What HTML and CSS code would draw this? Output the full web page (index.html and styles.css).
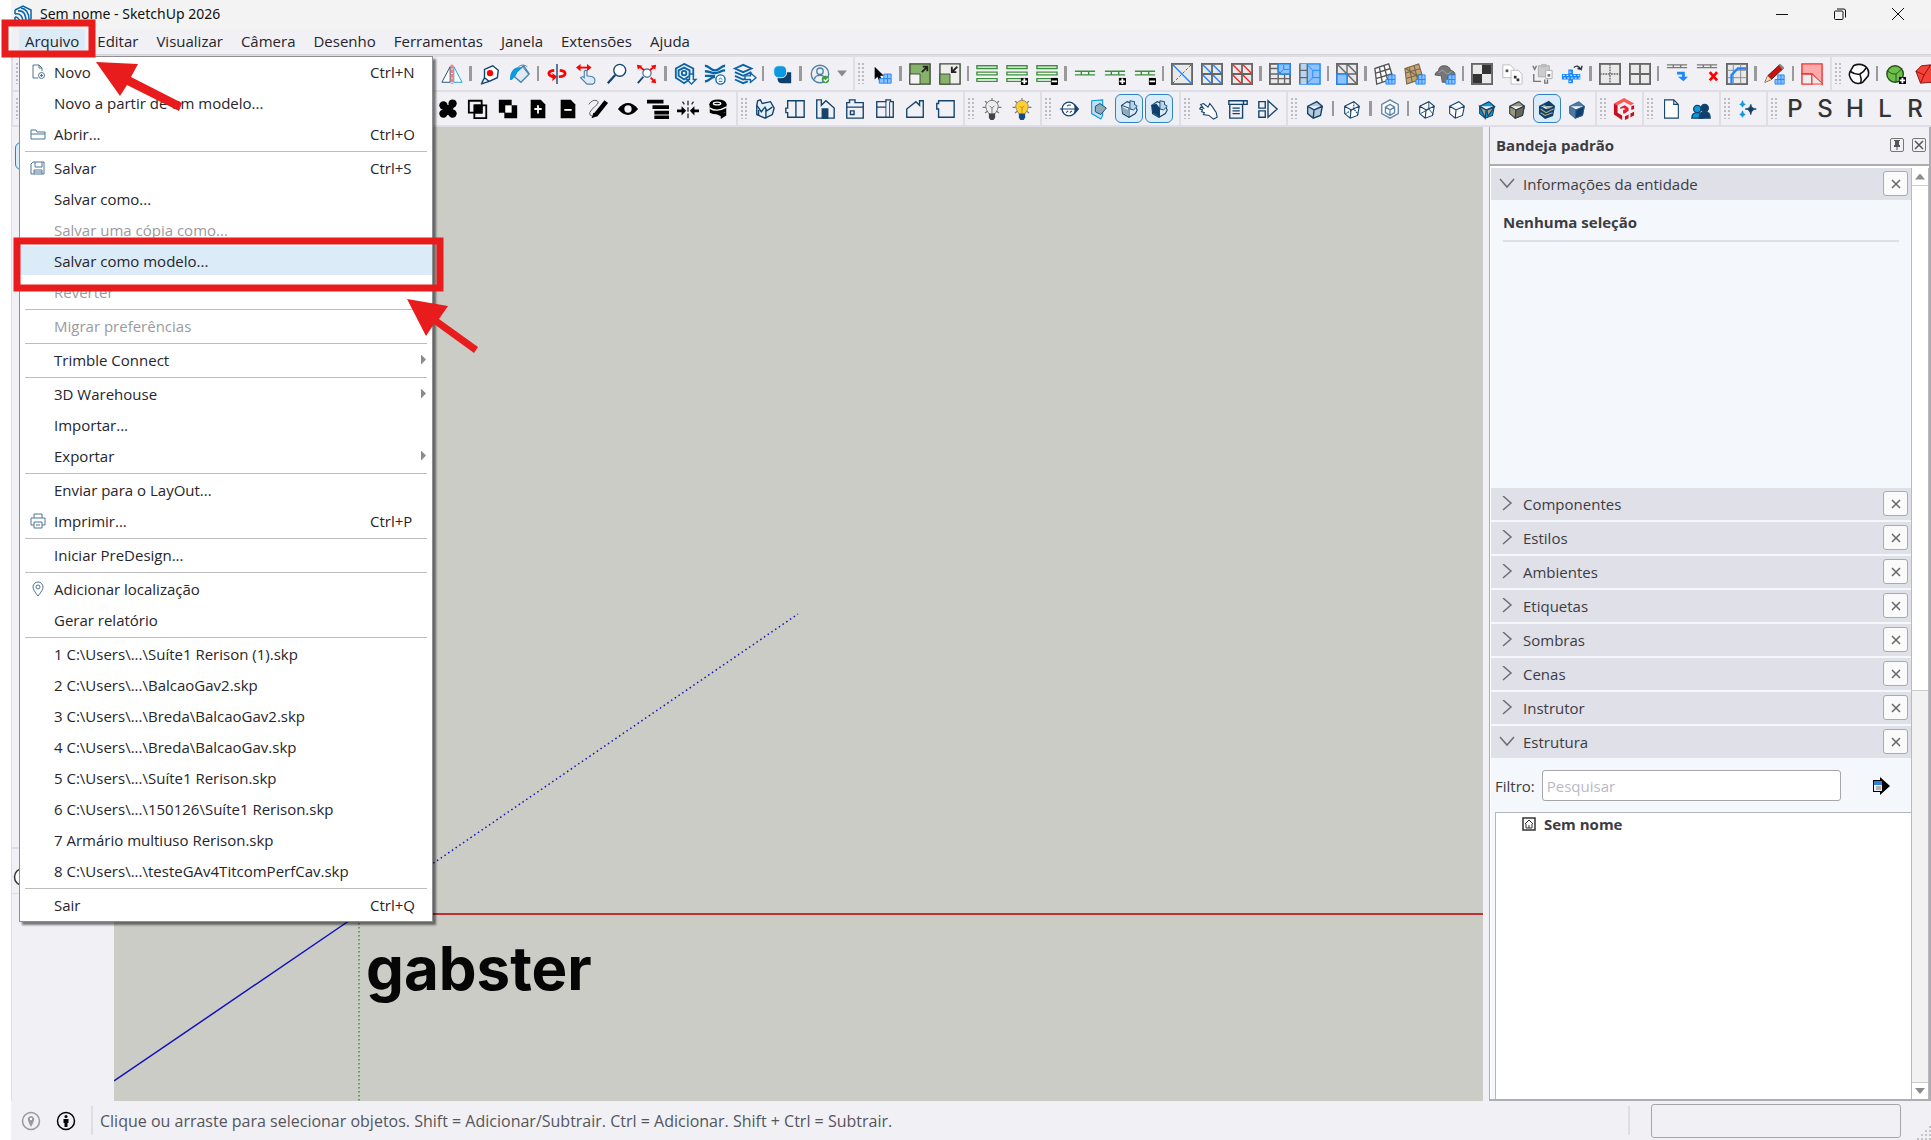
FILE: index.html
```html
<!DOCTYPE html>
<html lang="pt-BR">
<head>
<meta charset="utf-8">
<title>Sem nome - SketchUp 2026</title>
<link rel="stylesheet" href="styles.css">
</head>
<body>
<div class="app">
  <header class="titlebar">
    <svg class="logo" viewBox="0 0 20 20"><g fill="none" stroke="#0a64a8" stroke-width="1.500"><path d="M2 6l8-4 8 4v9l-5 4M2 6v4M2 13v3l6 3"/><path d="M2 10c5-1 8 2 8 9M5 7c6-1 8 4 8 11M8 4c6 1 8 5 8 12M2 13c2 0 4 1 5 5"/></g></svg>
    <h1>Sem nome - SketchUp 2026</h1>
    <div class="window-controls">
      <button aria-label="Minimizar"><svg viewBox="0 0 14 14"><path d="M1 7.500h12"/></svg></button>
      <button aria-label="Restaurar"><svg viewBox="0 0 14 14"><rect x="1.500" y="4" width="8.500" height="8.500" rx="1"/><path d="M4 2h7q1.500 0 1.500 2v6.500" /></svg></button>
      <button aria-label="Fechar"><svg viewBox="0 0 14 14"><path d="M1 1l12 12M13 1L1 13"/></svg></button>
    </div>
  </header>

  <nav class="menubar">
    <button class="open">Arquivo</button><button>Editar</button><button>Visualizar</button><button>Câmera</button><button>Desenho</button><button>Ferramentas</button><button>Janela</button><button>Extensões</button><button>Ajuda</button>
  </nav>

  <svg class="defs" aria-hidden="true">
    <symbol id="cube" viewBox="0 0 24 24"><path d="M4 9l10-5 6 5-2 10-8 3-6-5zM4 9l7 4 9-4M11 13l-1 9"/></symbol>
    <symbol id="grid" viewBox="0 0 24 24"><rect x="1" y="1" width="22" height="22" fill="#e9e9e9" stroke="#666" stroke-width="2"/></symbol>
    <symbol id="plus" viewBox="0 0 8 8"><rect width="8" height="8" rx="1" fill="#000"/><path d="M4 1v6M1 4h6" stroke="#fff" stroke-width="2"/></symbol>
    <symbol id="minus" viewBox="0 0 8 8"><rect width="8" height="8" rx="1" fill="#000"/><path d="M1 4h6" stroke="#fff" stroke-width="2"/></symbol>
    <symbol id="tiles" viewBox="0 0 12 12"><path d="M4 1h7v10H1V6h3z" fill="#8ec2ff" stroke="#1a86ff"/><path d="M4 6h7M4 6v5M7.500 1v10" stroke="#1a86ff" fill="none"/></symbol>
    <symbol id="house" viewBox="0 0 24 24"><path d="M4 8l6-4 8 3 3 6-2 4-7 4-7-4z" fill="#dcebf7" stroke="#14436e" stroke-width="1.200"/><path d="M13 7V3l5 1v3l3 2-4 4-4-1z" fill="#b9d3e8" stroke="#14436e"/><path d="M12 11v10M12 11l-8-3" stroke="#14436e" fill="none"/></symbol>
    <symbol id="close" viewBox="0 0 10 10"><path d="M1 1l8 8M9 1L1 9" stroke="#666" stroke-width="1.500"/></symbol>
  </svg>

  <div class="toolbars">
    <div class="toolbar-row">
      <div class="toolbar main"><i class="grip"></i>
        <button class="tool push"><svg viewBox="0 0 24 24"><path d="M10 4v17H1z" fill="#fff" stroke="#14436e"/><path d="M14 4v17h9z" fill="#fff" stroke="#0b9adf"/><path d="M12 2v21" stroke="#f77" stroke-width="3" stroke-dasharray="4 1"/></svg></button>
        <i class="sep"></i>
        <button class="tool"><svg viewBox="0 0 24 24"><path d="M6 7l9-4 6 5-1 8-9 4-5-4zM11 20l-9 3M6 16l-3 6" fill="#fff" stroke="#14436e" stroke-width="1.500"/><circle cx="12" cy="11" r="3.500" fill="#f00"/></svg></button>
        <button class="tool"><svg viewBox="0 0 24 24"><path d="M8 10l8-7 6 9-9 9-7-6z" fill="#dcebf7" stroke="#4d80a6" stroke-width="1.500"/><path d="M8 12c-1-9 7-12 12-8M14 3l7 9" fill="none" stroke="#4d80a6"/><path d="M1 18C1 8 7 3 14 5l-7 7c-1 5-5 8-6 6z" fill="#0b9adf"/></svg></button>
        <i class="sep thin"></i>
        <button class="tool"><svg viewBox="0 0 24 24"><path d="M9 8c-8 1-8 6 1 7M15 8c8 1 8 6-1 7" fill="none" stroke="#f00" stroke-width="3"/><path d="M7 11l5 4-5 5z" fill="#f00"/><path d="M12 1v22" stroke="#14436e" stroke-width="1.500"/></svg></button>
        <button class="tool"><svg viewBox="0 0 24 24"><path d="M3 5h11" stroke="#f00" stroke-width="2"/><path d="M0 5l5-4v8zM17 5l-5-4v8z" fill="#f00"/><path d="M9 16V9q1.500-2 3 0v5l6 1q4 2 2 7l-2 1h-6l-7-7q2-2 4 0z" fill="#dcebf7" stroke="#4d80a6" stroke-width="1.200"/></svg></button>
        <button class="tool"><svg viewBox="0 0 24 24"><circle cx="15" cy="8" r="6.500" fill="#fff" stroke="#14436e" stroke-width="1.500"/><path d="M10 13l-8 9" stroke="#14436e" stroke-width="2.500"/></svg></button>
        <button class="tool"><svg viewBox="0 0 24 24"><circle cx="12" cy="11" r="4.500" fill="#fff" stroke="#4d80a6" stroke-width="1.500"/><path d="M8 15l-6 7" stroke="#14436e" stroke-width="2"/><path d="M1 2l6 1-5 4zM22 2l-6 1 5 4zM22 22l-6-1 5-4z" fill="#f00"/><path d="M4 4l5 4M20 4l-5 4M20 20l-4-4" stroke="#f00" stroke-width="2"/></svg></button>
        <i class="sep"></i>
        <button class="tool"><svg viewBox="0 0 24 24" fill="none" stroke="#0a64a8" stroke-width="2"><path d="M11 1l10 5v9l-10 7-9-6V6z"/><path d="M11 5l6 3v6l-6 4-6-4V8z"/><circle cx="11" cy="11" r="2.500"/><path d="M17 12h4v6h3l-5 5-5-5h3z" fill="#fff" stroke-width="1.500"/></svg></button>
        <button class="tool"><svg viewBox="0 0 24 24" fill="none" stroke="#0a64a8" stroke-width="2.500"><path d="M1 3c5 0 6 5 11 5s6-5 11-5M1 9c5 0 6 2 11 2s6-3 11-3M1 20c5 0 6-5 11-5M1 14h11"/><circle cx="18" cy="18" r="5" fill="#fff" stroke-width="1.500"/><path d="M16 18q2-3 4 0M16 20h4" stroke-width="1"/></svg></button>
        <button class="tool"><svg viewBox="0 0 24 24" fill="none" stroke="#0a64a8" stroke-width="2"><path d="M1 6l9-4 9 4-9 4zM1 10l9 4 9-4M1 14l9 4 5-2M1 18l9 4 5-2"/><path d="M12 14h6v-3l6 5-6 5v-3h-6z" fill="#fff" stroke-width="1.500"/></svg></button>
        <i class="sep thin"></i>
        <button class="tool"><svg viewBox="0 0 24 24"><path d="M12 10h10v12H12q-5 0-5-6z" fill="#0f3f6b"/><rect x="3" y="3" width="14" height="13" rx="5" fill="#0b9adf" stroke="#f1f0f5"/></svg></button>
        <i class="sep"></i>
        <button class="tool"><svg viewBox="0 0 24 24" fill="none" stroke="#4d80a6" stroke-width="1.500"><circle cx="12" cy="12" r="9.500"/><circle cx="12" cy="9" r="3.500"/><path d="M6 18c0-6 12-6 12 0"/><circle cx="18" cy="18" r="4" fill="#3a9e3f" stroke="none"/><path d="M16 18l2 2 3-3" stroke="#fff"/></svg></button>
        <button class="caret" aria-label="Conta"></button>
      </div>
      <div class="toolbar"><i class="grip"></i>
        <button class="tool"><svg viewBox="0 0 24 24"><path d="M4 4v14l3-3 2 5 3-1-2-5h4z"/><path d="M14 12h8v10H9v-5h5z" fill="#8ec2ff" stroke="#1a86ff"/><path d="M14 17h8M18 12v10M14 17v5" stroke="#1a86ff"/></svg></button>
        <i class="sep"></i>
        <button class="tool"><svg viewBox="0 0 24 24"><path d="M1 1h22v22H1z" fill="#86b26a" stroke="#3d4a35" stroke-width="1.500"/><path d="M1 12h11v11H1z" fill="#f3f3f3" stroke="#3d4a35"/><path d="M14 10l5-5M15 4h5v5" fill="none" stroke="#222" stroke-width="2"/></svg></button>
        <button class="tool"><svg viewBox="0 0 24 24"><path d="M1 1h22v22H1z" fill="#eee" stroke="#3d4a35" stroke-width="1.500"/><path d="M1 12h11v11H1z" fill="#86b26a" stroke="#3d4a35"/><path d="M20 4l-5 5M14 4v6h5" fill="none" stroke="#222" stroke-width="2"/></svg></button>
        <i class="sep thin"></i>
        <button class="tool"><svg viewBox="0 0 24 24" fill="#fff" stroke="#3c8f3a" stroke-width="1.500"><path d="M1 3h22v3H1zM1 10h22v3H1zM1 17h22v3H1z"/></svg></button>
        <button class="tool"><svg viewBox="0 0 24 24"><path d="M1 3h22v3H1zM1 10h22v3H1zM1 17h22v3H1z" fill="#fff" stroke="#3c8f3a" stroke-width="1.500"/><use href="#plus" x="16" y="16" width="8" height="8"/></svg></button>
        <button class="tool"><svg viewBox="0 0 24 24"><path d="M1 3h22v3H1zM1 10h22v3H1zM1 17h22v3H1z" fill="#fff" stroke="#3c8f3a" stroke-width="1.500"/><use href="#minus" x="16" y="16" width="8" height="8"/></svg></button>
        <i class="sep"></i>
        <button class="tool"><svg viewBox="0 0 24 24" fill="none" stroke="#3c8f3a" stroke-width="1.500"><path d="M1 9h22M1 13h22M8 9v4M16 9v4"/></svg></button>
        <button class="tool"><svg viewBox="0 0 24 24"><path d="M1 9h22M1 13h22M8 9v4M16 9v4" stroke="#3c8f3a" stroke-width="1.500"/><use href="#plus" x="16" y="16" width="8" height="8"/></svg></button>
        <button class="tool"><svg viewBox="0 0 24 24"><path d="M1 9h22M1 13h22M8 9v4M16 9v4" stroke="#3c8f3a" stroke-width="1.500"/><use href="#minus" x="16" y="16" width="8" height="8"/></svg></button>
        <i class="sep thin"></i>
        <button class="tool"><svg viewBox="0 0 24 24"><use href="#grid"/><path d="M2 22L22 2" stroke="#555" stroke-dasharray="3 2"/><path d="M2 2l20 20" stroke="#1a86ff" stroke-width="1.500"/></svg></button>
        <button class="tool"><svg viewBox="0 0 24 24"><use href="#grid"/><path d="M12 1v22M1 12h22" stroke="#666" stroke-width="2"/><path d="M2 2l9 9M13 2l9 9M2 13l9 9M13 13l9 9" stroke="#1a86ff" stroke-width="1.500"/></svg></button>
        <button class="tool"><svg viewBox="0 0 24 24"><use href="#grid"/><path d="M12 1v22M1 12h22" stroke="#666" stroke-width="2"/><path d="M2 2l9 9M13 2l9 9M2 13l9 9M13 13l9 9" stroke="#f22" stroke-width="1.500"/></svg></button>
        <i class="sep"></i>
        <button class="tool"><svg viewBox="0 0 24 24"><use href="#grid"/><path d="M10 1v22M1 12h22M1 6h9M17 12v11M1 17h22" stroke="#666" stroke-width="1.500"/><path d="M10 1h13v11H13l-3-3z" fill="#8ec2ff" stroke="#1a86ff" stroke-width="1.500"/><path d="M16 2v5h6M16 7l-4 4" stroke="#1a86ff" fill="none"/></svg></button>
        <button class="tool"><svg viewBox="0 0 24 24"><path d="M1 1h22v22H1z" fill="#8ec2ff" stroke="#1a86ff" stroke-width="1.500"/><path d="M1 1h8v22H1z" fill="#b5d5f5"/><path d="M1 8h8M1 16h8M9 1v22M1 1v22" stroke="#666" stroke-width="1.500"/><path d="M9 2l6 6h8M15 8v8h8M15 16l-6 6" stroke="#1a86ff" fill="none"/></svg></button>
        <i class="sep thin"></i>
        <button class="tool"><svg viewBox="0 0 24 24"><use href="#grid"/><path d="M12 1v22M1 12h22M2 2l20 20M13 2l9 9" stroke="#666" stroke-width="1.500"/><path d="M1 12h11v11H1z" fill="#8ec2ff" stroke="#1a86ff" stroke-width="1.500"/></svg></button>
        <i class="sep"></i>
        <button class="tool"><svg viewBox="0 0 24 24"><path d="M1 6l15-5 5 16-18 6zM6 5l3 16M11 3l4 16M2 11l16-5M2 17l17-5" fill="#fff" stroke="#555" stroke-width="1.500"/><use href="#tiles" x="12" y="12" width="12" height="12"/></svg></button>
        <button class="tool"><svg viewBox="0 0 24 24"><path d="M1 6l15-5 5 16-18 6zM6 5l3 16M11 3l4 16M2 11l16-5M2 17l17-5M2 6l18 12" fill="#c2a679" stroke="#7b6544" stroke-width="1.200"/><use href="#tiles" x="12" y="12" width="12" height="12"/></svg></button>
        <button class="tool"><svg viewBox="0 0 24 24"><path d="M1 13q1-4 4-4 0-6 6-6t7 5q5 1 5 5l-8 1-1 7h-5l-1-7z" fill="#777" stroke="#555"/><path d="M5 11q4-5 7-1t7-1" fill="none" stroke="#aaa"/><use href="#tiles" x="12" y="12" width="12" height="12"/></svg></button>
        <i class="sep thin"></i>
        <button class="tool"><svg viewBox="0 0 24 24"><use href="#grid"/><path d="M12 2h10v10H12zM2 12h10v10H2z" fill="#333"/></svg></button>
        <button class="tool"><svg viewBox="0 0 24 24" fill="#fff" stroke="#bbb"><path d="M2 2h8l4 4v10H2z"/><path d="M5 7h3v3H5z" fill="#555" stroke="none"/><path d="M11 8h8l4 4v11H11z"/><path d="M14 14h3v3h3v3h-3v-3h-3z" fill="#333" stroke="none"/></svg></button>
        <button class="tool"><svg viewBox="0 0 24 24"><path d="M8 3h12v12H8z" fill="#ccc" stroke="#aaa"/><path d="M11 1h6v4h-6z" fill="#bbb"/><path d="M16 8h7v9h-7z" fill="#fff" stroke="#aaa"/><path d="M18 12h3v3h-3z" fill="#777"/><path d="M2 3l2 4 2-4M3 12v8h8M15 18v4h3v-4" fill="none" stroke="#777" stroke-width="1.500"/></svg></button>
        <button class="tool"><svg viewBox="0 0 24 24"><path d="M8 7h5v5h8v6h-8v4H8v-4H1v-6h7z" fill="#1a86ff"/><path d="M2 13.500h18M3 16.500h18M9 10h4M9 20h4" stroke="#cfe4ff" stroke-width="1.500" stroke-dasharray="2 2"/><path d="M14 5q4-4 8 2l1-4M22 7l-4-1" fill="none" stroke="#333" stroke-width="1.500"/></svg></button>
        <i class="sep"></i>
        <button class="tool"><svg viewBox="0 0 24 24"><use href="#grid"/><path d="M12 1v22M1 12h22" stroke="#666" stroke-width="1.500" stroke-dasharray="2 1"/></svg></button>
        <button class="tool"><svg viewBox="0 0 24 24"><use href="#grid"/><path d="M12 1v22M1 12h22" stroke="#666" stroke-width="2"/></svg></button>
        <i class="sep thin"></i>
        <button class="tool"><svg viewBox="0 0 24 24" fill="none"><path d="M1 2h22M1 5h22M8 2v3M16 2v3" stroke="#777" stroke-width="1.500"/><path d="M12 11h7v6" stroke="#1a86ff" stroke-width="3"/><path d="M13 15h11l-5 5z" fill="#1a86ff"/></svg></button>
        <button class="tool"><svg viewBox="0 0 24 24"><path d="M1 2h22M1 5h22M8 2v3M16 2v3" stroke="#777" stroke-width="1.500"/><path d="M15 10l8 9M23 10l-8 9" stroke="#f00" stroke-width="3"/></svg></button>
        <button class="tool"><svg viewBox="0 0 24 24"><use href="#grid"/><path d="M8 1v22M16 1v22M1 8h22M1 16h22" stroke="#888"/><path d="M6 22V13l7-7h9" fill="none" stroke="#1a86ff" stroke-width="2.500"/></svg></button>
        <i class="sep"></i>
        <button class="tool"><svg viewBox="0 0 24 24"><path d="M1 21l3-7L17 2l4 4L8 18z" fill="#c11" stroke="#422"/><path d="M1 21l3-7 4 4z" fill="#eda"/><path d="M16 2l2-1 4 4-2 2z" fill="#888"/><use href="#tiles" x="11" y="12" width="12" height="12"/></svg></button>
        <i class="sep thin"></i>
        <button class="tool"><svg viewBox="0 0 24 24"><path d="M1 1h22v22L12 12H1z" fill="#faa" stroke="#e33" stroke-width="1.500"/><path d="M1 12h11v11H1z" fill="#eee" stroke="#e33" stroke-width="1.500"/><path d="M12 23h11v-1L12 12z" fill="#e9e9e9" stroke="#e33"/></svg></button>
      </div>
      <div class="toolbar last"><i class="grip"></i>
        <button class="tool"><svg viewBox="0 0 24 24" fill="#fff" stroke="#111" stroke-width="1.700"><path d="M6 3q6-3 12 0 6 4 4 11l-6 7q-6 3-11-1-5-6-3-10z"/><path d="M2 9q6 4 11 3 5-3 7-7M13 12q2 5 1 10" fill="none"/></svg></button>
        <i class="sep thin"></i>
        <button class="tool"><svg viewBox="0 0 24 24"><circle cx="11" cy="12" r="9" fill="#6cc04a" stroke="#264d18" stroke-width="1.500"/><path d="M3 9q5 4 9 3l7-6M12 12v9" fill="none" stroke="#264d18"/><use href="#plus" x="15" y="15" width="8" height="8"/></svg></button>
        <button class="tool"><svg viewBox="0 0 24 24"><path d="M1 9l6-6 10-1 5 8-4 11-12 1z" fill="#f44336" stroke="#811"/><path d="M1 9l9 4 7-11M10 13l-4 9" stroke="#811" fill="none"/></svg></button>
      </div>
    </div>
    <div class="toolbar-row">
      <div class="toolbar edit"><i class="grip"></i>
        <button class="tool push"><svg viewBox="0 0 24 24"><circle cx="7" cy="8" r="4.500"/><circle cx="17" cy="6" r="4.500"/><circle cx="7" cy="17" r="4.500"/><circle cx="17" cy="17" r="4.500"/><path d="M7 7q5 2 8-1l4 3q-3 4 0 7l-4 4q-4-3-7 0l-3-5q3-3-1-6z"/></svg></button>
        <button class="tool"><svg viewBox="0 0 24 24" fill="none" stroke="#000" stroke-width="2"><path d="M2 3h14v13H2zM8 8h13v14H8z"/><path d="M9 8h7v8H9z" fill="#000"/></svg></button>
        <button class="tool"><svg viewBox="0 0 24 24"><path d="M2 2h14v6h6v14H8v-6H2z"/><path d="M9 8h7v8H9z" fill="#fff"/></svg></button>
        <button class="tool"><svg viewBox="0 0 24 24"><path d="M4 2h11l5 5v15H4z"/><path d="M12 8v9M8 12h8" stroke="#fff" stroke-width="2"/></svg></button>
        <button class="tool"><svg viewBox="0 0 24 24"><path d="M4 2h11l5 5v15H4z"/><path d="M8 13h8" stroke="#fff" stroke-width="2"/></svg></button>
        <button class="tool"><svg viewBox="0 0 24 24"><path d="M2 7q4-6 9-4 3 2-2 6t-6 7 3 4" fill="none" stroke="#555"/><path d="M5 22l2-6 4 4z"/><path d="M9 19L21 4" stroke="#000" stroke-width="5"/></svg></button>
        <button class="tool"><svg viewBox="0 0 24 24"><path d="M1 12Q12-1 23 12 12 25 1 12z"/><circle cx="12" cy="12" r="4" fill="#f1f0f5"/></svg></button>
        <button class="tool"><svg viewBox="0 0 24 24" stroke="#000" stroke-width="4"><path d="M0 4h18M6 10h18M8 16h16M8 21h16"/></svg></button>
        <button class="tool"><svg viewBox="0 0 24 24"><path d="M0 14h7M17 14h7" stroke="#000" stroke-width="3"/><path d="M5 9l5 5-5 5zM19 9l-5 5 5 5z"/><path d="M12 3v19M6 4l2 3M18 4l-2 3" stroke="#333" stroke-width="1.500" stroke-dasharray="5 2"/></svg></button>
        <button class="tool"><svg viewBox="0 0 24 24"><path d="M3 7v9q8 4 18-1V7z"/><ellipse cx="12" cy="7" rx="9.500" ry="5.500"/><path d="M9 17q9 0 12-2v4l-6 4v-3z"/><ellipse cx="11" cy="6" rx="4" ry="1.500" fill="none" stroke="#fff" stroke-width="1.500"/><path d="M3 11q8 5 18-1" fill="none" stroke="#fff" stroke-width="1.500"/></svg></button>
      </div>
      <div class="toolbar navy"><i class="grip"></i>
        <button class="tool"><svg viewBox="0 0 24 24"><path d="M3 8l1-5 3-1 2 4 9-2 4 7-2 7-8 4-9-4z" fill="#e3eef6"/><path d="M3 8l5 7 4-5 2 4 6-4M13 12v10M5 13v6"/></svg></button>
        <button class="tool"><svg viewBox="0 0 24 24"><path d="M4 3h18v18H4v-5H2v-5h2zM13 3v18"/></svg></button>
        <button class="tool"><svg viewBox="0 0 24 24"><path d="M3 22V2h5v6l5-5 9 8v11z"/><path d="M9 12h6v10H9z" fill="#14436e"/></svg></button>
        <button class="tool"><svg viewBox="0 0 24 24"><path d="M3 5h3V2h6v3h9v17H3zM3 10h18M7 14h4v4H7z"/></svg></button>
        <button class="tool"><svg viewBox="0 0 24 24"><path d="M3 4h10V2h5v2h3v17H3zM3 10h10"/><path d="M13 4v17M17 4v17" stroke-width="1"/></svg></button>
        <button class="tool"><svg viewBox="0 0 24 24"><path d="M3 21V12l10-8 4 4V3h4v18z"/></svg></button>
        <button class="tool"><svg viewBox="0 0 24 24"><path d="M5 3h17v18H5v-9H3V6h2z"/></svg></button>
      </div>
      <div class="toolbar"><i class="grip"></i>
        <button class="tool"><svg viewBox="0 0 24 28"><path d="M12 0v3M3 4l3 2M21 4l-3 2M0 12h4M24 12h-4M3 19l3-2M21 19l-3-2" stroke="#777" stroke-width="1.500"/><path d="M4 11a8 8 0 1 1 16 0q0 3-4 9H8q-4-6-4-9z" fill="#eee" stroke="#555"/><path d="M9 10l3 3 3-3M12 13v6" stroke="#555" fill="none"/><path d="M8 20h8v5l-2 3h-4l-2-3z" fill="#444"/></svg></button>
        <button class="tool"><svg viewBox="0 0 24 28"><path d="M12 0v3M3 4l3 2M21 4l-3 2M0 12h4M24 12h-4M3 19l3-2M21 19l-3-2" stroke="#777" stroke-width="1.500"/><path d="M4 11a8 8 0 1 1 16 0q0 3-4 9H8q-4-6-4-9z" fill="#ffd02e" stroke="#777"/><path d="M9 10l3 3 3-3M12 13v6" stroke="#a67c00" fill="none"/><path d="M8 20h8v5l-2 3h-4l-2-3z" fill="#174a80"/></svg></button>
      </div>
      <div class="toolbar roomy"><i class="grip"></i>
        <button class="tool"><svg viewBox="0 0 24 24"><circle cx="12" cy="12" r="7.500" fill="#fff" stroke="#14436e" stroke-width="1.500"/><path d="M2 12h20M10 9q1-2 4-1M9 16l2-2M13 16l2-2" stroke="#14436e" stroke-width="1.200" fill="none"/><path d="M18 6l5 6-5 6z" fill="#14436e"/></svg></button>
        <button class="tool"><svg viewBox="0 0 24 24"><path d="M4 3l12-1v17L14 23 4 17z" fill="#bfe2f5" stroke="#0b9adf" stroke-width="1.200"/><path d="M8 9l5-3 7 5-6 7-6-3z" fill="#8fa9bd" stroke="#14436e"/></svg></button>
        <button class="tool on"><svg viewBox="0 0 24 24"><use href="#house"/><path d="M5 10l6 3v6l-6-3z" fill="#8fa9bd"/></svg></button>
        <button class="tool on"><svg viewBox="0 0 24 24"><use href="#house"/><path d="M4 8l5-2 4 5v10l-8-5z" fill="#0f3f6b"/></svg></button>
      </div>
      <div class="toolbar navy"><i class="grip"></i>
        <button class="tool"><svg viewBox="0 0 24 24"><path d="M7 6l5 4 2-4 3 4 4 6 1 5-4 2-5-4-6-1 1-2-3-1 1-2-3-1 1-2 3 1-3-4z" fill="#fff" stroke-width="1.200"/></svg></button>
        <button class="tool"><svg viewBox="0 0 24 24"><path d="M2 3h20v4H2zM3 7h14v15H3zM6 11h8M6 14h8M6 17h8M18 3v4"/></svg></button>
        <button class="tool"><svg viewBox="0 0 24 24"><path d="M2 4h7v7H2zM2 14h7v7H2zM12 3l10 9-10 9z"/></svg></button>
      </div>
      <div class="toolbar"><i class="grip"></i>
        <button class="tool"><svg viewBox="0 0 24 24" fill="#b6cadb" stroke="#14436e" stroke-width="1.500"><use href="#cube"/></svg></button>
        <i class="sep thin"></i>
        <button class="tool"><svg viewBox="0 0 24 24" fill="#fff" stroke="#14436e" stroke-width="1.200"><use href="#cube"/><path d="M14 4v8l5 6M14 12l-9 5" stroke-dasharray="2 1" fill="none"/></svg></button>
        <i class="sep"></i>
        <button class="tool"><svg viewBox="0 0 24 24" fill="#fff" stroke="#6288a8" stroke-width="1.500"><path d="M12 2l9 5v10l-9 5-9-5V7z"/><path d="M12 7l5 3v6l-5 3-5-3v-6zM7 10l5 3 5-3M12 13v6"/></svg></button>
        <i class="sep thin"></i>
        <button class="tool"><svg viewBox="0 0 24 24" fill="#fff" stroke="#14436e" stroke-width="1.200"><use href="#cube"/><path d="M14 4v8l5 6M14 12l-9 5" fill="none" stroke-width="1"/></svg></button>
        <button class="tool"><svg viewBox="0 0 24 24" fill="#fff" stroke="#14436e" stroke-width="1.200"><use href="#cube"/></svg></button>
        <button class="tool"><svg viewBox="0 0 24 24" fill="#0b9adf" stroke="#14436e" stroke-width="1.200"><use href="#cube"/><path d="M4 9l7 4-1 9z" fill="#a8a084"/><path d="M12 13l8-3-7 10z" fill="#a8a084"/></svg></button>
        <button class="tool"><svg viewBox="0 0 24 24" fill="#9c967c" stroke="#2b3e4c" stroke-width="1.200"><use href="#cube"/><path d="M11 13l9-4-2 10-8 3z" fill="#6b675a"/></svg></button>
        <button class="tool on"><svg viewBox="0 0 24 24" fill="#0f3f6b" stroke="#0f3f6b" stroke-width="1.500"><use href="#cube"/><path d="M8 8l6 3 4-2M5 12l6 4 8-4M5 16l5 3 8-3" stroke="#b5ad85" stroke-width="1.200" fill="none"/></svg></button>
        <button class="tool"><svg viewBox="0 0 24 24" fill="#4c7aa5" stroke="#2f5d88" stroke-width="1"><use href="#cube"/><path d="M11 13l9-4-2 10-8 3z" fill="#0f3f6b"/></svg></button>
      </div>
      <div class="toolbar"><i class="grip"></i>
        <button class="tool"><svg viewBox="0 0 24 24"><path d="M12 0l11 6-4 2-7-4-7 4-4-2z" fill="#f55"/><path d="M1 6l4 2v8l5 3v5l-9-6zM23 8l-3 1v4l3-1zM23 15l-4 2v4l4-2zM13 20l4-2v4l-4 2z" fill="#c8101c"/><path d="M8 10l5-2 4 3v3l-4 3h-2v-4l3-1-3-1-3 1z" fill="#e0202b"/></svg></button>
      </div>
      <div class="toolbar navy"><i class="grip"></i>
        <button class="tool"><svg viewBox="0 0 24 24"><path d="M5 2h10l5 5v15H5zM15 2v5h5" fill="#fff" stroke-width="1.200"/></svg></button>
        <button class="tool"><svg viewBox="0 0 24 24" stroke="none"><circle cx="8" cy="12" r="4" fill="#0b9adf"/><path d="M2 22q0-6 6-6t6 6z" fill="#0b9adf"/><circle cx="16" cy="11" r="4" fill="#0f3f6b"/><path d="M10 22q0-7 6-7t6 7z" fill="#0f3f6b"/></svg></button>
      </div>
      <div class="toolbar"><i class="grip"></i>
        <button class="tool"><svg viewBox="0 0 24 24"><path d="M15 7q1 5 6 5-5 0-6 6-1-6-6-6 5 0 6-5z" fill="#0f3f6b" stroke="#0f3f6b"/><path d="M6 3l1 3 2 1-2 1-1 2-1-2-2-1 2-1zM6 14l1 3 2 1-2 1-1 2-1-2-2-1 2-1z" fill="#0b9adf" stroke="#0b9adf"/></svg></button>
      </div>
      <div class="toolbar last"><i class="grip"></i>
        <button class="tool letter">P</button><button class="tool letter">S</button><button class="tool letter">H</button><button class="tool letter">L</button><button class="tool letter">R</button>
      </div>
    </div>
  </div>

  <main class="workspace">
    <aside class="palette">
      <span class="palette-active"></span>
      <span class="palette-group"><svg viewBox="0 0 20 20"><circle cx="10" cy="10" r="8.500" fill="#fff" stroke="#333" stroke-width="1.500"/></svg></span>
    </aside>

    <section class="viewport">
      <svg class="axes">
        <path d="M0 954L245 787" stroke="#1212b8" stroke-width="1.500"/>
        <path d="M245 787L684 487" stroke="#1212b8" stroke-width="1.500" stroke-dasharray="1.500 3"/>
        <path d="M245 788V974" stroke="#2b9a2b" stroke-width="1.500" stroke-dasharray="1.500 2.500"/>
        <line x1="245" y1="787" x2="100%" y2="787" stroke="#c03030" stroke-width="2"/>
      </svg>
      <span class="brand">gabster</span>
    </section>

    <aside class="tray">
      <header class="tray-head">
        <h2>Bandeja padrão</h2>
        <button aria-label="Fixar"><svg viewBox="0 0 12 12"><path d="M3 1h6v1H8v4h1v2H3V6h1V2H3zM5.500 8h1v3h-1z" fill="#555"/></svg></button>
        <button aria-label="Fechar bandeja"><svg viewBox="0 0 12 12"><path d="M2 2l8 8M10 2l-8 8" stroke="#555" stroke-width="1.500"/></svg></button>
      </header>
      <div class="tray-body">
        <div class="panels">
          <div class="panel-head"><svg class="chev" viewBox="0 0 16 16"><path d="M1 3l7 8 7-8"/></svg><h3>Informações da entidade</h3><button aria-label="Fechar"><svg><use href="#close"/></svg></button></div>
          <div class="entity"><strong>Nenhuma seleção</strong></div>
          <div class="panel-head"><svg class="chev" viewBox="0 0 16 16"><path d="M4 0l8 7-8 7"/></svg><h3>Componentes</h3><button aria-label="Fechar"><svg><use href="#close"/></svg></button></div>
          <div class="panel-head"><svg class="chev" viewBox="0 0 16 16"><path d="M4 0l8 7-8 7"/></svg><h3>Estilos</h3><button aria-label="Fechar"><svg><use href="#close"/></svg></button></div>
          <div class="panel-head"><svg class="chev" viewBox="0 0 16 16"><path d="M4 0l8 7-8 7"/></svg><h3>Ambientes</h3><button aria-label="Fechar"><svg><use href="#close"/></svg></button></div>
          <div class="panel-head"><svg class="chev" viewBox="0 0 16 16"><path d="M4 0l8 7-8 7"/></svg><h3>Etiquetas</h3><button aria-label="Fechar"><svg><use href="#close"/></svg></button></div>
          <div class="panel-head"><svg class="chev" viewBox="0 0 16 16"><path d="M4 0l8 7-8 7"/></svg><h3>Sombras</h3><button aria-label="Fechar"><svg><use href="#close"/></svg></button></div>
          <div class="panel-head"><svg class="chev" viewBox="0 0 16 16"><path d="M4 0l8 7-8 7"/></svg><h3>Cenas</h3><button aria-label="Fechar"><svg><use href="#close"/></svg></button></div>
          <div class="panel-head"><svg class="chev" viewBox="0 0 16 16"><path d="M4 0l8 7-8 7"/></svg><h3>Instrutor</h3><button aria-label="Fechar"><svg><use href="#close"/></svg></button></div>
          <div class="panel-head"><svg class="chev" viewBox="0 0 16 16"><path d="M1 3l7 8 7-8"/></svg><h3>Estrutura</h3><button aria-label="Fechar"><svg><use href="#close"/></svg></button></div>
          <div class="filter">
            <label for="filtro">Filtro:</label>
            <input id="filtro" type="text" placeholder="Pesquisar">
            <button aria-label="Opções"><svg viewBox="0 0 20 20"><path d="M1 4h7V1l10 9-10 9v-3H1z" fill="#000"/><path d="M2 5h8v10H2z" fill="#eee"/><path d="M2 5h8v4H2z" fill="#2f7fe0"/><path d="M4 11h5M4 13h5" stroke="#777"/></svg></button>
          </div>
          <div class="tree">
            <svg viewBox="0 0 14 14"><path d="M1 1h12v12H1z" fill="#fff" stroke="#333" stroke-width="1.500"/><path d="M3 7l4-4 4 4M4 7v4h6V7M7 8v3" fill="none" stroke="#333"/></svg>
            <strong>Sem nome</strong>
          </div>
        </div>
        <div class="scrollbar"><button class="up" aria-label="Subir"></button><span class="thumb"></span><button class="down" aria-label="Descer"></button></div>
      </div>
    </aside>
  </main>

  <footer class="statusbar">
    <svg viewBox="0 0 20 20"><circle cx="10" cy="10" r="8.500" fill="none" stroke="#999" stroke-width="1.500"/><path d="M10 16q-4-7-3-9 3-4 6 0 1 2-3 9z" fill="#999"/><circle cx="10" cy="8" r="1.200" fill="#fff"/></svg>
    <svg viewBox="0 0 20 20"><circle cx="10" cy="10" r="8.500" fill="none" stroke="#000" stroke-width="1.500"/><circle cx="10" cy="5.500" r="1.500"/><path d="M7.500 8h5v4h-1v4h-3v-4h-1z"/></svg>
    <i class="bar"></i>
    <p>Clique ou arraste para selecionar objetos. Shift = Adicionar/Subtrair. Ctrl = Adicionar. Shift + Ctrl = Subtrair.</p>
    <i class="bar"></i>
    <output class="measure"></output>
    <svg class="sizegrip" viewBox="0 0 16 16"><path d="M14 3h2M10 7h2M14 7h2M6 11h2M10 11h2M14 11h2M2 15h2M6 15h2M10 15h2M14 15h2" stroke="#b5b5b5" stroke-width="1.500"/></svg>
  </footer>
</div>

<div class="menu" role="menu">
  <button><svg viewBox="0 0 16 16"><path d="M8 14H3V1h6l3 3v3M9 1v3h3"/><circle cx="11.500" cy="11.500" r="3"/><path d="M11.500 10v3M10 11.500h3"/></svg><span>Novo</span><kbd>Ctrl+N</kbd></button>
  <button><span>Novo a partir de um modelo...</span></button>
  <button><svg viewBox="0 0 16 16"><path d="M1 13V4h5l1 2h8v7zM1 8h14"/></svg><span>Abrir...</span><kbd>Ctrl+O</kbd></button>
  <hr>
  <button><svg viewBox="0 0 16 16"><path d="M3 2h11v12H1V4zM5 2v5h7V2M4 14v-4h8v4M4 12h8"/></svg><span>Salvar</span><kbd>Ctrl+S</kbd></button>
  <button><span>Salvar como...</span></button>
  <button disabled><span>Salvar uma cópia como...</span></button>
  <button class="hover"><span>Salvar como modelo...</span></button>
  <button disabled><span>Reverter</span></button>
  <hr>
  <button disabled><span>Migrar preferências</span></button>
  <hr>
  <button class="sub"><span>Trimble Connect</span></button>
  <hr>
  <button class="sub"><span>3D Warehouse</span></button>
  <button><span>Importar...</span></button>
  <button class="sub"><span>Exportar</span></button>
  <hr>
  <button><span>Enviar para o LayOut...</span></button>
  <button><svg viewBox="0 0 16 16"><path d="M4 5V1h8v4M4 12H1V5h14v7h-3M4 9h8v6H4zM6 12h4"/></svg><span>Imprimir...</span><kbd>Ctrl+P</kbd></button>
  <hr>
  <button><span>Iniciar PreDesign...</span></button>
  <hr>
  <button><svg viewBox="0 0 16 16"><path d="M8 15Q3 9 3 6a5 5 0 0 1 10 0q0 3-5 9z"/><circle cx="8" cy="6" r="2"/></svg><span>Adicionar localização</span></button>
  <button><span>Gerar relatório</span></button>
  <hr>
  <button><span>1 C:\Users\...\Suíte1 Rerison (1).skp</span></button>
  <button><span>2 C:\Users\...\BalcaoGav2.skp</span></button>
  <button><span>3 C:\Users\...\Breda\BalcaoGav2.skp</span></button>
  <button><span>4 C:\Users\...\Breda\BalcaoGav.skp</span></button>
  <button><span>5 C:\Users\...\Suíte1 Rerison.skp</span></button>
  <button><span>6 C:\Users\...\150126\Suíte1 Rerison.skp</span></button>
  <button><span>7 Armário multiuso Rerison.skp</span></button>
  <button><span>8 C:\Users\...\testeGAv4TitcomPerfCav.skp</span></button>
  <hr>
  <button><span>Sair</span><kbd>Ctrl+Q</kbd></button>
</div>

<svg class="marks" aria-hidden="true">
  <g fill="none" stroke="#e81c1c" stroke-width="7"><rect x="5" y="23" width="87" height="31"/><rect x="17" y="241" width="423" height="47"/></g>
  <g fill="#e81c1c"><path d="M96 62l42 2-7 13 51 26-3 8-52-26-7 11z"/><path d="M407 299l41 7-9 13 39 28-4 6-40-29-8 12z"/></g>
</svg>
</body>
</html>
```
FILE: styles.css
```css
* { box-sizing: border-box; }
body {
  margin: 0;
  background: #fff;
  color: #26262b;
  font: 15px/20px "Open Sans", "Noto Sans", sans-serif;
  overflow: hidden;
}
h1, h2, h3, p { margin: 0; font-size: inherit; font-weight: inherit; }
button { padding: 0; border: 0; background: none; color: inherit; font: inherit; }
.defs { display: none; }

.app {
  display: flex;
  flex-direction: column;
  min-height: 100vh;
  margin-left: 11px;
  background: #f1f0f5;
}

/* Title bar */
.titlebar { display: flex; align-items: center; height: 29px; padding: 0 4px 2px 2px; background: #f3f3f3; color: #111; }
.titlebar h1 { font: 14px/20px "Noto Sans", sans-serif; }
.logo { width: 20px; height: 20px; margin-right: 7px; }
.window-controls { display: flex; margin-left: auto; }
.window-controls button { display: grid; place-items: center; width: 58px; height: 27px; }
.window-controls svg { width: 14px; height: 14px; fill: none; stroke: #111; stroke-width: 1; }

/* Menu bar */
.menubar { display: flex; gap: 6px; height: 26px; padding: 0 8px; border-bottom: 1px solid #d4d3da; }
.menubar button { height: 24px; padding: 0 6px; }
.menubar .open { background: #dbebf8; }

/* Toolbars */
.toolbar-row { display: flex; height: 35px; border-top: 2px solid #dfdee6; overflow: hidden; }
.toolbars { border-bottom: 2px solid #dfdee6; }
.toolbar { display: flex; flex: none; align-items: center; padding-right: 3px; border-left: 2px solid #dfdee6; }
.toolbar.main { width: 842px; padding-right: 4px; }
.toolbar.edit { width: 725px; }
.toolbar.roomy { padding-right: 5px; }
.toolbar.last { padding-right: 0; }
.grip {
  flex: none;
  width: 6px; height: 21px; margin: 0 3px;
  background: radial-gradient(circle at 1px 1px, #bdbcc4 1px, transparent 1px) 0 0 / 4px 4px;
}
.push { margin-left: auto; }
.tool { display: grid; flex: none; place-items: center; width: 30px; height: 29px; }
.tool svg { width: 22px; height: 22px; overflow: visible; }
.tool.on { width: 28px; margin: 0 1px; border: 1px solid #2f83bf; border-radius: 6px; background: #dbebf8; }
.tool.letter { color: #333; font: 500 24px/28px "Inter", sans-serif; }
.navy svg { fill: none; stroke: #14436e; stroke-width: 1.5; }
.sep { flex: none; width: 8px; height: 15px; border: solid transparent; border-width: 0 3px 0 2px; background: #9a9a9a padding-box; }
.sep.thin { width: 7px; }
.caret { width: 14px; height: 10px; background: #8a8a8f; clip-path: polygon(15% 20%, 85% 20%, 50% 80%); }

/* Workspace */
.workspace { display: flex; flex: 1; }
.palette { position: relative; flex: none; width: 103px; border-left: 1px solid #dfdee6; }
.palette-active { position: absolute; top: 15px; left: 3px; width: 28px; height: 28px; border: 1px solid #2f83bf; border-radius: 6px; background: #dbebf8; }
.palette-group { position: absolute; top: 720px; left: 0; width: 90px; height: 47px; padding: 18px 1px; border: solid #dfdee6; border-width: 2px 0 1px; }
.palette-group svg { display: block; width: 20px; height: 20px; }
.viewport { position: relative; flex: 1; min-width: 0; background: #ccccc7; }
.axes { position: absolute; inset: 0; width: 100%; height: 100%; }
.brand { position: absolute; left: 252px; top: 805px; color: #060606; font: 700 60px/72px "Inter", sans-serif; }

/* Tray */
.tray { display: flex; flex: none; flex-direction: column; width: 442px; margin-left: 6px; border: solid #aeadb3; border-width: 0 2px 2px 1px; color: #3c3c42; }
.tray-head { display: flex; gap: 8px; align-items: center; height: 39px; padding: 0 3px 2px 6px; border-bottom: 2px solid #aeadb3; }
.tray-head h2 { flex: 1; font-weight: 700; }
.tray-head button { display: grid; width: 14px; height: 14px; border: 1px solid #777; border-radius: 2px; }
.tray-body { display: flex; flex: 1; padding: 2px 0 0 1px; background: #fff; }
.panels { display: flex; flex: 1; flex-direction: column; background: #f4f7fc; }
.panel-head { display: flex; align-items: center; height: 32px; margin-bottom: 2px; padding: 0 3px 1px 8px; background: #e0e0e9; }
.panel-head h3 { flex: 1; padding-left: 8px; }
.panel-head button { display: grid; place-items: center; width: 25px; height: 25px; border: 1px solid #aaa; border-radius: 3px; background: #fafafa; }
.panel-head button svg { width: 10px; height: 10px; }
.chev { width: 16px; height: 16px; fill: none; stroke: #6d6d74; stroke-width: 1.5; }
.entity { height: 286px; margin: 0 12px; padding-top: 9px; }
.entity strong { display: block; height: 31px; border-bottom: 2px solid #dfdfe8; line-height: 22px; }
.filter { display: flex; align-items: center; gap: 7px; height: 52px; padding: 0 4px 1px; }
.filter input { width: 299px; height: 31px; padding: 0 4px; border: 1px solid #a5a5aa; border-radius: 3px; background: #fff; font: inherit; }
.filter input::placeholder { color: #b9b9c6; }
.filter button { width: 20px; height: 20px; margin-left: 24px; }
.filter svg { display: block; }
.tree { display: flex; flex: 1; gap: 8px; align-items: flex-start; margin-left: 4px; padding: 1px 26px; border: solid #b5b5ba; border-width: 1px 0 0 1px; background: #fff; }
.tree svg { width: 14px; height: 14px; margin-top: 3px; }
.scrollbar { display: flex; flex-direction: column; width: 18px; border: solid #b9b9be; border-width: 0 1px; background: #f2f2f2; }
.scrollbar button { display: grid; place-items: center; height: 17px; background: #fff; }
.scrollbar button::after { content: ""; width: 10px; height: 6px; background: #8a8a8f; clip-path: polygon(0 100%, 50% 0, 100% 100%); }
.scrollbar .down { margin-top: auto; border-top: 1px solid #ccc; }
.scrollbar .down::after { clip-path: polygon(0 0, 100% 0, 50% 100%); }
.thumb { height: 506px; border: solid #ccc; border-width: 1px 0; background: #fff; }

/* Status bar */
.statusbar { display: flex; align-items: center; height: 39px; padding-left: 10px; color: #55555c; font-size: 16px; }
.statusbar svg { width: 20px; height: 20px; margin-right: 15px; }
.statusbar .bar { width: 2px; height: 29px; background: #dfdee6; }
.statusbar p { flex: 1; padding-left: 7px; }
.measure { width: 250px; height: 34px; margin: 0 14px 0 21px; border: 1px solid #a5a5aa; border-radius: 3px; }
.statusbar .sizegrip { align-self: flex-end; width: 16px; height: 16px; margin: 0; }

/* File menu */
.menu {
  position: absolute; left: 19px; top: 56px; width: 414px;
  border: 1px solid #8f8f93;
  background: #fff;
  box-shadow: 3px 3px 2px #00000080;
}
.menu button { display: flex; align-items: center; width: 100%; height: 31px; padding: 0 10px 2px 34px; text-align: left; }
.menu button svg { width: 16px; height: 16px; margin: 0 8px 0 -24px; fill: none; stroke: #4f7496; stroke-width: 1; }
.menu span { flex: 1; }
.menu kbd { width: 52px; font: inherit; }
.menu button:disabled { color: #9a9aa0; }
.menu .hover { background: linear-gradient(#dbebf8, #dbebf8) 0 0 / 100% 29px no-repeat; }
.menu .sub::after { content: ""; width: 5px; height: 10px; margin-right: -4px; background: #8a8a8f; clip-path: polygon(0 0, 100% 50%, 0 100%); }
.menu hr { height: 1px; margin: 1px 5px; border: 0; background: #bdbdbd; }

.marks { position: absolute; left: 0; top: 0; width: 500px; height: 360px; pointer-events: none; }
```
